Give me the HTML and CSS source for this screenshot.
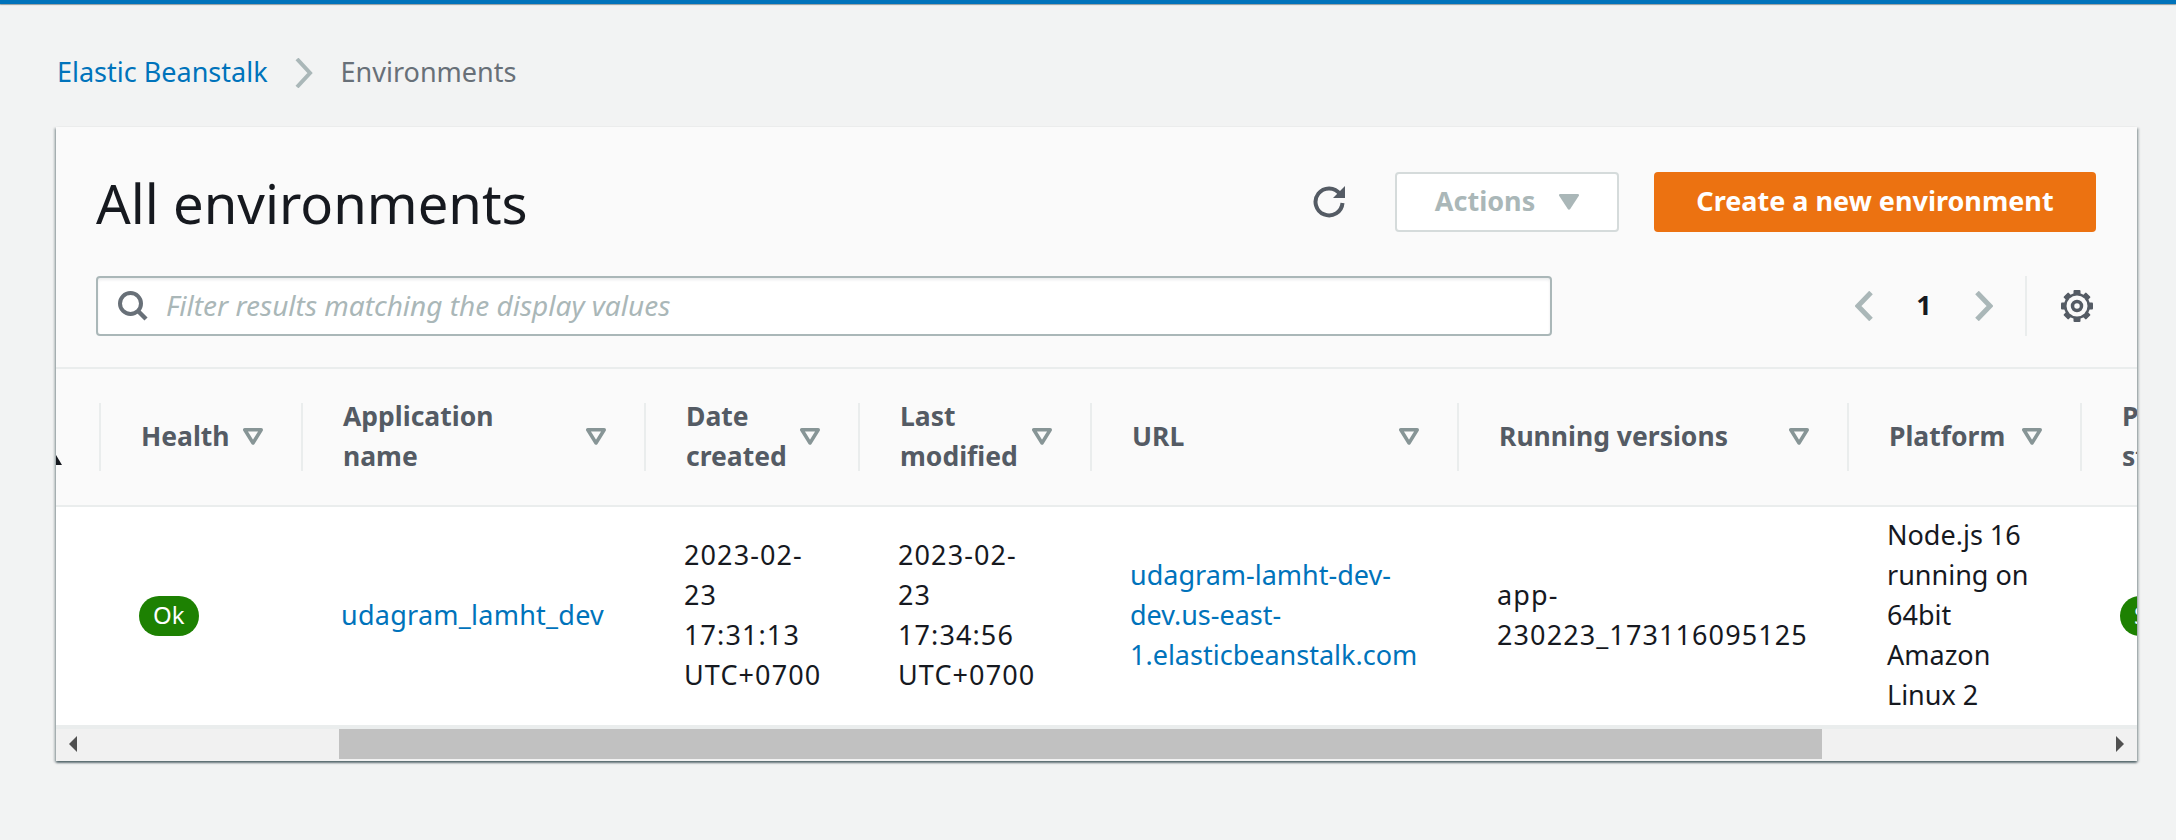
FILE: index.html
```html
<!DOCTYPE html>
<html lang="en">
<head>
<meta charset="utf-8">
<title>All environments</title>
<link rel="stylesheet" href="styles.css">
</head>
<body>
<div class="topbar"></div>
<nav class="crumbs">
  <a class="link crumb-text" href="#">Elastic Beanstalk</a>
  <svg class="crumb-sep" viewBox="0 0 18 30"><path d="M2 1l13 14L2 29" fill="none" stroke="#aab7b8" stroke-width="4"/></svg>
  <span class="crumb-text crumb-current">Environments</span>
</nav>
<section class="card">
  <header class="card-head">
    <div class="title-row">
      <h1>All environments</h1>
      <div class="actions">
        <svg class="refresh" viewBox="0 0 33 32"><path d="M27 8A13.500 13.500 0 1 0 29.500 17" fill="none" stroke="#545b64" stroke-width="4"/><path d="M32 0v12H20z" fill="#545b64"/></svg>
        <button class="btn btn-disabled">Actions<svg class="caret" viewBox="0 0 20 16"><path d="M1.500 0h17c1.300 0 1.900 1 1.200 2.100L11.200 15c-.6.900-1.800.9-2.400 0L.3 2.100C-.4 1 .2 0 1.500 0z" fill="#aab7b8"/></svg></button>
        <button class="btn btn-primary">Create a new environment</button>
      </div>
    </div>
    <div class="filter-row">
      <div class="filter">
        <svg class="search" viewBox="0 0 30 30"><circle cx="12.500" cy="12.500" r="10.500" fill="none" stroke="#687078" stroke-width="4"/><path d="M20 20l8 8" stroke="#687078" stroke-width="4.500" fill="none"/></svg>
        <span class="placeholder">Filter results matching the display values</span>
      </div>
      <div class="pager">
        <svg class="pg-arrow" viewBox="0 0 18 30"><path d="M16 1.500L3 15l13 13.500" fill="none" stroke="#aab7b8" stroke-width="5"/></svg>
        <span class="pg-num">1</span>
        <svg class="pg-arrow" viewBox="0 0 18 30"><path d="M2 1.500L15 15 2 28.500" fill="none" stroke="#aab7b8" stroke-width="5"/></svg>
      </div>
      <div class="prefs">
        <svg class="gear" viewBox="0 0 32 32">
          <g fill="#545b64">
            <circle cx="16" cy="16" r="13"/>
            <rect x="12.500" y="0" width="7" height="32" rx="1"/>
            <rect x="12.500" y="0" width="7" height="32" rx="1" transform="rotate(45 16 16)"/>
            <rect x="12.500" y="0" width="7" height="32" rx="1" transform="rotate(90 16 16)"/>
            <rect x="12.500" y="0" width="7" height="32" rx="1" transform="rotate(135 16 16)"/>
          </g>
          <circle cx="16" cy="16" r="10.500" fill="#fafafa"/>
          <circle cx="16" cy="16" r="4.500" fill="none" stroke="#545b64" stroke-width="3.500"/>
        </svg>
      </div>
    </div>
  </header>
  <div class="table-wrap">
    <table>
      <colgroup>
        <col class="c0"><col class="c1"><col class="c2"><col class="c3"><col class="c4"><col class="c5"><col class="c6"><col class="c7"><col class="c8">
      </colgroup>
      <thead>
        <tr>
          <th><div class="sort-cell"><svg class="sort-mark" viewBox="0 0 12 10"><path d="M6 0l6 10H0z" fill="#16191f"/></svg></div></th>
          <th><div class="th"><span>Health</span><svg class="tri" viewBox="0 0 20 17"><path d="M1.750 1.750h16.500L10 15z" fill="none" stroke="#879596" stroke-width="3.500" stroke-linejoin="round"/></svg></div></th>
          <th><div class="th"><span>Application<br>name</span><svg class="tri" viewBox="0 0 20 17"><path d="M1.750 1.750h16.500L10 15z" fill="none" stroke="#879596" stroke-width="3.500" stroke-linejoin="round"/></svg></div></th>
          <th><div class="th"><span>Date<br>created</span><svg class="tri" viewBox="0 0 20 17"><path d="M1.750 1.750h16.500L10 15z" fill="none" stroke="#879596" stroke-width="3.500" stroke-linejoin="round"/></svg></div></th>
          <th><div class="th"><span>Last<br>modified</span><svg class="tri" viewBox="0 0 20 17"><path d="M1.750 1.750h16.500L10 15z" fill="none" stroke="#879596" stroke-width="3.500" stroke-linejoin="round"/></svg></div></th>
          <th><div class="th"><span>URL</span><svg class="tri" viewBox="0 0 20 17"><path d="M1.750 1.750h16.500L10 15z" fill="none" stroke="#879596" stroke-width="3.500" stroke-linejoin="round"/></svg></div></th>
          <th><div class="th"><span>Running versions</span><svg class="tri" viewBox="0 0 20 17"><path d="M1.750 1.750h16.500L10 15z" fill="none" stroke="#879596" stroke-width="3.500" stroke-linejoin="round"/></svg></div></th>
          <th><div class="th"><span>Platform</span><svg class="tri" viewBox="0 0 20 17"><path d="M1.750 1.750h16.500L10 15z" fill="none" stroke="#879596" stroke-width="3.500" stroke-linejoin="round"/></svg></div></th>
          <th><div class="th"><span>Platform<br>state</span></div></th>
        </tr>
      </thead>
      <tbody>
        <tr>
          <td></td>
          <td><span class="badge">Ok</span></td>
          <td class="app-name"><a class="link" href="#">udagram_lamht_dev</a></td>
          <td class="num">2023-02-<br>23<br>17:31:13<br>UTC+0700</td>
          <td class="num">2023-02-<br>23<br>17:34:56<br>UTC+0700</td>
          <td><a class="link" href="#">udagram-lamht-dev-<br>dev.us-east-<br>1.elasticbeanstalk.com</a></td>
          <td class="num">app-<br>230223_173116095125</td>
          <td>Node.js 16<br>running on<br>64bit<br>Amazon<br>Linux 2</td>
          <td><span class="badge">Supported</span></td>
        </tr>
      </tbody>
    </table>
  </div>
  <div class="hscroll">
    <button class="sb-btn"><svg class="sb-arrow" viewBox="0 0 8 16"><path d="M8 0v16L0 8z" fill="#505050"/></svg></button>
    <div class="sb-thumb"></div>
    <button class="sb-btn sb-end"><svg class="sb-arrow" viewBox="0 0 8 16"><path d="M0 0v16l8-8z" fill="#505050"/></svg></button>
  </div>
</section>
</body>
</html>
```
FILE: styles.css
```css
* { box-sizing: border-box; }
html, body { margin: 0; height: 100%; }
body {
  background: #f2f3f3;
  color: #16191f;
  font-family: "Noto Sans", "Liberation Sans", sans-serif;
  font-size: 27px;
  line-height: 40px;
  overflow: hidden;
}
.topbar {
  height: 4px;
  background: #0073bb;
  box-shadow: 0 1px 1px rgba(0, 28, 36, .4);
}
.link { color: #0073bb; text-decoration: none; }
.crumbs {
  display: flex;
  align-items: center;
  height: 40px;
  margin: 49px 0 34px 57px;
}
.crumb-text { margin-bottom: 3px; }
.crumb-sep { width: 18px; height: 30px; margin: 0 28px 0 27px; }
.crumb-current { color: #687078; }
.card {
  width: 2081px;
  margin-left: 56px;
  background: #fff;
  box-shadow: 0 2px 2px rgba(0, 28, 36, .5), 2px 1px 2px rgba(0, 28, 36, .2), -2px 1px 2px rgba(0, 28, 36, .2);
}
.card-head {
  height: 242px;
  padding: 45px 41px 0 40px;
  background: #fafafa;
  border-bottom: 2px solid #eaeded;
}
.title-row { display: flex; align-items: center; justify-content: space-between; height: 60px; }
h1 { margin: 0; padding-top: 2px; font-size: 54.400px; line-height: 60px; font-weight: 400; color: #16191f; }
.actions { display: flex; align-items: center; }
.refresh { width: 33px; height: 32px; margin-right: 49px; }
.btn {
  display: flex;
  align-items: center;
  justify-content: center;
  height: 60px;
  padding: 0 0 3px;
  border-radius: 4px;
  font: 700 27px/40px "Noto Sans", "Liberation Sans", sans-serif;
}
.btn-disabled {
  width: 224px;
  margin-right: 35px;
  background: #fff;
  border: 2px solid #d5dbdb;
  color: #aab7b8;
}
.caret { width: 20px; height: 16px; margin: 3px 0 0 24px; }
.btn-primary { width: 442px; background: #ec7211; border: 0; color: #fff; }
.filter-row { display: flex; align-items: center; height: 60px; margin-top: 44px; }
.filter {
  display: flex;
  align-items: center;
  width: 1456px;
  height: 60px;
  padding-left: 20px;
  background: #fff;
  border: 2px solid #aab7b8;
  border-radius: 4px;
  box-shadow: inset 0 2px 3px rgba(0, 28, 36, .08);
}
.search { width: 30px; height: 30px; margin-right: 18px; }
.placeholder { margin-bottom: 2px; color: #aab7b8; font-size: 28px; font-style: italic; }
.pager { display: flex; align-items: center; margin-left: 303px; }
.pg-arrow { width: 18px; height: 30px; }
.pg-num { width: 102px; margin-bottom: 2px; text-align: center; font-weight: 700; }
.prefs {
  display: flex;
  align-items: center;
  height: 60px;
  margin-left: 32px;
  padding-left: 34px;
  border-left: 2px solid #eaeded;
}
.gear { width: 32px; height: 32px; }
.table-wrap { overflow: hidden; }
table { width: 2325px; table-layout: fixed; border-collapse: separate; border-spacing: 0; }
.c0 { width: 43px; }
.c1 { width: 202px; }
.c2 { width: 343px; }
.c3 { width: 214px; }
.c4 { width: 232px; }
.c5 { width: 367px; }
.c6 { width: 390px; }
.c7 { width: 233px; }
.c8 { width: 301px; }
thead tr { height: 138px; }
th {
  padding: 0;
  background: #fafafa;
  border-bottom: 2px solid #eaeded;
  color: #545b64;
  font-size: 26.500px;
  font-weight: 700;
  text-align: left;
}
.th {
  display: flex;
  align-items: flex-end;
  justify-content: space-between;
  height: 68px;
  padding: 0 38px 0 40px;
  border-left: 2px solid #eaeded;
}
.th span { flex: none; align-self: center; margin-bottom: 3px; }
.tri { flex: none; width: 20px; height: 17px; margin-bottom: 26px; }
.sort-cell { height: 68px; padding-top: 52px; }
.sort-mark { display: block; width: 12px; height: 10px; margin-left: -6px; }
tbody tr { height: 218px; background: #fff; }
td { padding: 0 0 2px 40px; vertical-align: middle; white-space: nowrap; }
.num { letter-spacing: 1.100px; }
.app-name { letter-spacing: .25px; }
.badge {
  display: inline-block;
  height: 40px;
  padding: 0 14px;
  border-radius: 20px;
  background: #1d8102;
  color: #fff;
  font-size: 24px;
  line-height: 38px;
  vertical-align: middle;
}
.hscroll {
  display: flex;
  align-items: stretch;
  height: 36px;
  padding-bottom: 2px;
  background: #f1f1f1;
  border-top: 4px solid #eaeded;
}
.sb-btn {
  display: flex;
  align-items: center;
  justify-content: center;
  width: 34px;
  padding: 0;
  background: none;
  border: 0;
}
.sb-end { margin-left: auto; }
.sb-arrow { width: 8px; height: 16px; }
.sb-thumb { width: 1483px; margin-left: 249px; background: #c1c1c1; }
```
